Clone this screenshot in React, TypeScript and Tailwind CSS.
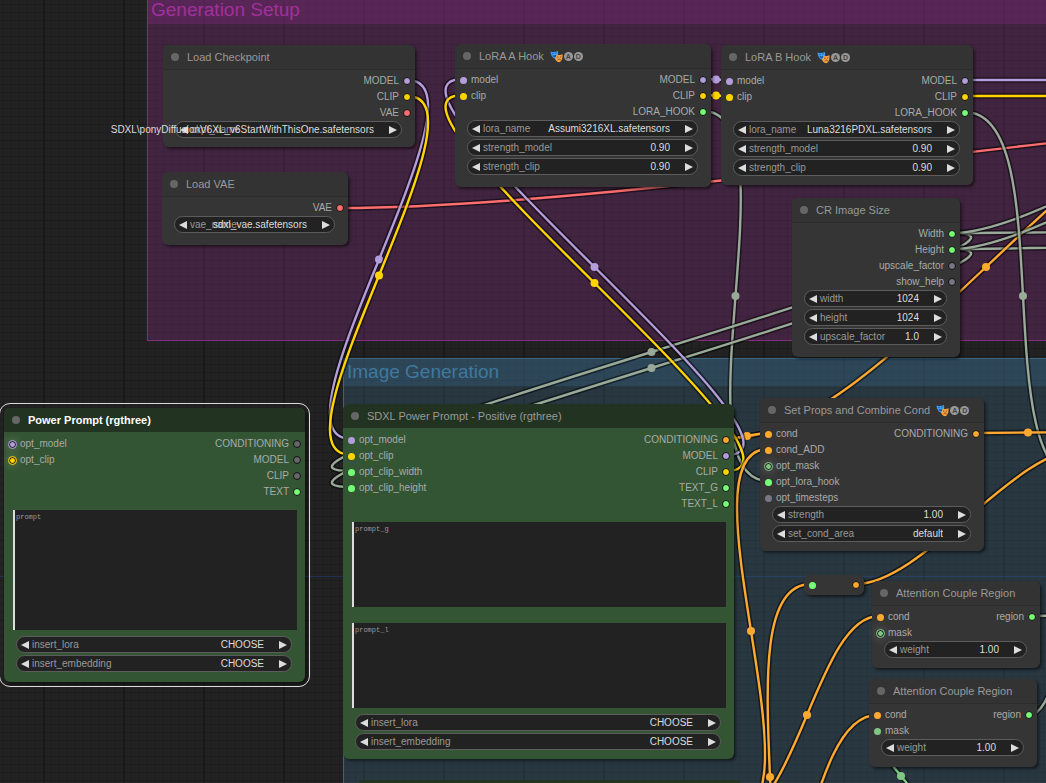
import React, { useId } from "react";
import clsx from "clsx";

type Kind = "model" | "clip" | "vae" | "cond" | "value" | "mask" | "off" | "any";

type Slot = { name: string; kind: Kind; ring?: boolean };

type Widget =
  | { type: "combo"; label: string; value: string }
  | { type: "number"; label: string; value: string };

type NodeProps = {
  title: string;
  place: string;
  tone?: "gray" | "green";
  hooks?: boolean;
  selected?: boolean;
  inputs?: Slot[];
  outputs?: Slot[];
  prompts?: { name: string; size: string }[];
  widgets: Widget[];
};

const dotColor: Record<Kind, string> = {
  model: "bg-[#b39ddb]",
  clip: "bg-[#ffd500]",
  vae: "bg-[#ff6e6e]",
  cond: "bg-[#ffa931]",
  value: "bg-[#77ff77]",
  mask: "bg-[#81c784]",
  off: "bg-[#666666]",
  any: "bg-[#777788]",
};

const ringColor: Partial<Record<Kind, string>> = {
  model: "outline-[#b39ddb]",
  clip: "outline-[#ffd500]",
  mask: "outline-[#81c784]",
};

function Dot({ slot, output }: { slot: Slot; output?: boolean }) {
  return (
    <span className="flex size-2 shrink-0 items-center justify-center">
      <span
        className={clsx(
          "rounded-full",
          dotColor[slot.kind],
          output && "size-2 border border-[#111]",
          !output && !slot.ring && "size-[7px]",
          slot.ring &&
            "size-[7px] border border-[#111] shadow-[0_0_8px_3px_rgba(255,255,255,0.14)] outline outline-1",
          slot.ring && ringColor[slot.kind],
        )}
      />
    </span>
  );
}

function Masks() {
  return (
    <svg viewBox="0 0 26 26" className="ml-[6px] size-[13px] shrink-0" aria-hidden="true">
      <path d="M1 3c5 1.500 10 1.500 15-1 .8 6 .5 13-5 15.500C5 17 1.500 10 1 3z" fill="#3f9df5" />
      <path d="M4.500 6.500l3 .3M10.500 6.500l3-1M6 11c2 1.500 4 1 6-.5-1 4-4.500 4-6 .5z" stroke="#12508f" strokeWidth="1.500" fill="#12508f" />
      <path d="M13 9c4 1.500 8 1.500 12-.5.5 6.500-.5 13.500-6.500 16-5.500-1-8-5-8.500-8 2.500-2 3-4.500 3-7.500z" fill="#f5a142" />
      <path d="M14 14l3 .5M20 14.500l2.500-1M15 20.500c2-3 4.500-3 6.500-.5" stroke="#7a4312" strokeWidth="1.800" fill="none" />
    </svg>
  );
}

function Badge({ children }: { children: string }) {
  return (
    <span className="ml-px flex size-[9px] items-center justify-center rounded-full bg-[#999] text-[7px] leading-none font-bold text-[#444]">
      {children}
    </span>
  );
}

function Arrow({ dir, label }: { dir: "left" | "right"; label: string }) {
  return (
    <button type="button" aria-label={`${dir === "left" ? "Previous" : "Next"} ${label}`} className="shrink-0">
      <svg viewBox="0 0 8 8" className="size-2">
        <path d={dir === "left" ? "M8 0v8L0 4z" : "M0 0v8l8-4z"} fill="#ddd" />
      </svg>
    </button>
  );
}

function WidgetRow({ widget }: { widget: Widget }) {
  const id = useId();
  const valueClass = "col-start-1 row-start-1 appearance-none bg-transparent p-0 text-right text-[#ddd] outline-none";
  return (
    <div className="flex h-[17px] items-center gap-[3px] rounded-full border border-[#5c5c5c] bg-[#222] px-1 text-[10px] leading-none">
      <Arrow dir="left" label={widget.label} />
      <div className="mr-3 grid min-w-0 flex-1 grid-cols-[minmax(0,1fr)] items-center">
        <label htmlFor={id} className="col-start-1 row-start-1 whitespace-nowrap text-[#999]">
          {widget.label}
        </label>
        {widget.type === "combo" ? (
          <select id={id} defaultValue={widget.value} className={clsx(valueClass, "w-max justify-self-end")}>
            <option>{widget.value}</option>
          </select>
        ) : (
          <input id={id} defaultValue={widget.value} inputMode="decimal" className={clsx(valueClass, "w-9 justify-self-end")} />
        )}
      </div>
      <Arrow dir="right" label={widget.label} />
    </div>
  );
}

function GraphNode({
  title,
  place,
  tone = "gray",
  hooks,
  selected,
  inputs = [],
  outputs = [],
  prompts,
  widgets,
}: NodeProps) {
  const green = tone === "green";
  return (
    <section
      className={clsx(
        "absolute rounded-md text-[10px] leading-none text-[#aaa] shadow-[2px_2px_3px_rgba(0,0,0,0.5)]",
        green ? "bg-[#335533]" : "bg-[#353535]",
        selected && "outline outline-1 outline-offset-4 outline-[#ddd]",
        place,
      )}
    >
      <header
        className={clsx(
          "flex h-6 items-center rounded-t-md pl-2",
          green ? "bg-[#223322]" : "bg-[#333] shadow-[0_1px_0_#2c2c2c]",
        )}
      >
        <span className="mr-2 size-2 shrink-0 rounded-full bg-[#666]" />
        <h2 className={clsx("text-[11px] leading-none whitespace-nowrap", selected ? "font-bold text-white" : "text-[#999]")}>
          {title}
        </h2>
        {hooks && (
          <>
            <Masks />
            <Badge>A</Badge>
            <Badge>D</Badge>
          </>
        )}
      </header>
      <div className="flex justify-between px-1 pt-1">
        <ul>
          {inputs.map((slot) => (
            <li key={slot.name} className="flex h-4 items-center gap-1">
              <Dot slot={slot} />
              {slot.name}
            </li>
          ))}
        </ul>
        <ul>
          {outputs.map((slot) => (
            <li key={slot.name} className="flex h-4 items-center justify-end gap-1">
              {slot.name}
              <Dot slot={slot} output />
            </li>
          ))}
        </ul>
      </div>
      {prompts && (
        <div className="mt-[10px] mb-[6px] flex flex-col gap-4 pr-2 pl-[9px]">
          {prompts.map((p) => (
            <textarea
              key={p.name}
              aria-label={p.name}
              placeholder={p.name}
              className={clsx(
                "block w-full resize-none border-l-2 border-[#ddd] bg-[#222] px-px pt-[3px] font-['Liberation_Mono',monospace] text-[7px] leading-[8px] text-[#ddd] outline-none placeholder:text-[#999]",
                p.size,
              )}
            />
          ))}
        </div>
      )}
      <div className="mr-[13px] ml-3 flex flex-col gap-[2px]">
        {widgets.map((w) => (
          <WidgetRow key={w.label} widget={w} />
        ))}
      </div>
    </section>
  );
}

type Link = { from: [number, number]; to: [number, number]; color: string };

const violet = "#b39ddb";
const yellow = "#ffd500";
const orange = "#ffa931";
const sage = "#99aa99";

const links: Link[] = [
  { from: [340, 208], to: [1560, 101], color: "#ff6e6e" },
  { from: [407, 80], to: [351, 439], color: violet },
  { from: [407, 96], to: [351, 455], color: yellow },
  { from: [703, 79], to: [729, 80], color: violet },
  { from: [703, 95], to: [729, 96], color: yellow },
  { from: [703, 111], to: [768, 481], color: sage },
  { from: [965, 80], to: [1400, 80], color: violet },
  { from: [965, 96], to: [1400, 96], color: yellow },
  { from: [952, 233], to: [351, 471], color: sage },
  { from: [952, 249], to: [351, 487], color: sage },
  { from: [952, 233], to: [1500, 226], color: sage },
  { from: [952, 249], to: [1500, 238], color: sage },
  { from: [726, 439], to: [1246, 95], color: orange },
  { from: [952, 233], to: [1250, 130], color: sage },
  { from: [952, 249], to: [1250, 146], color: sage },
  { from: [965, 112], to: [1081, 480], color: sage },
  { from: [726, 439], to: [768, 433], color: orange },
  { from: [726, 455], to: [463, 79], color: violet },
  { from: [726, 471], to: [463, 95], color: yellow },
  { from: [976, 433], to: [1080, 432], color: orange },
  { from: [734, 813], to: [768, 449], color: orange },
  { from: [856, 584], to: [1081, 449], color: orange },
  { from: [729, 970], to: [811, 584], color: orange },
  { from: [735, 814], to: [879, 616], color: orange },
  { from: [729, 970], to: [877, 715], color: orange },
  { from: [1031, 616], to: [1200, 614], color: sage },
  { from: [1029, 715], to: [1085, 632], color: sage },
  { from: [925, 821], to: [877, 731], color: "#81c784" },
];

function Links() {
  return (
    <svg className="pointer-events-none absolute inset-0 h-full w-full" fill="none" aria-hidden="true">
      {links.map(({ from: [x1, y1], to: [x2, y2], color }, i) => {
        const bend = Math.hypot(x2 - x1, y2 - y1) / 4;
        const d = `M${x1} ${y1}C${x1 + bend} ${y1} ${x2 - bend} ${y2} ${x2} ${y2}`;
        return (
          <g key={i}>
            <path d={d} stroke="#000" strokeOpacity="0.5" strokeWidth="5.500" />
            <path d={d} stroke={color} strokeWidth="2.400" />
            <circle cx={(x1 + x2) / 2} cy={(y1 + y2) / 2} r="4" fill={color} />
          </g>
        );
      })}
    </svg>
  );
}

const choosers: Widget[] = [
  { type: "combo", label: "insert_lora", value: "CHOOSE" },
  { type: "combo", label: "insert_embedding", value: "CHOOSE" },
];

const hookInputs: Slot[] = [
  { name: "model", kind: "model" },
  { name: "clip", kind: "clip" },
];

const hookOutputs: Slot[] = [
  { name: "MODEL", kind: "model" },
  { name: "CLIP", kind: "clip" },
  { name: "LORA_HOOK", kind: "value" },
];

const nodes: NodeProps[] = [
  {
    title: "Load Checkpoint",
    place: "left-[163px] top-[45px] h-[102px] w-[252px]",
    outputs: [
      { name: "MODEL", kind: "model" },
      { name: "CLIP", kind: "clip" },
      { name: "VAE", kind: "vae" },
    ],
    widgets: [{ type: "combo", label: "ckpt_name", value: "SDXL\\ponyDiffusionV6XL_v6StartWithThisOne.safetensors" }],
  },
  {
    title: "Load VAE",
    place: "left-[162px] top-[172px] h-[73px] w-[186px]",
    outputs: [{ name: "VAE", kind: "vae" }],
    widgets: [{ type: "combo", label: "vae_name", value: "sdxl_vae.safetensors" }],
  },
  {
    title: "LoRA A Hook",
    place: "left-[455px] top-[44px] h-[143px] w-[256px]",
    hooks: true,
    inputs: hookInputs,
    outputs: hookOutputs,
    widgets: [
      { type: "combo", label: "lora_name", value: "Assumi3216XL.safetensors" },
      { type: "number", label: "strength_model", value: "0.90" },
      { type: "number", label: "strength_clip", value: "0.90" },
    ],
  },
  {
    title: "LoRA B Hook",
    place: "left-[721px] top-[45px] h-[140px] w-[252px]",
    hooks: true,
    inputs: hookInputs,
    outputs: hookOutputs,
    widgets: [
      { type: "combo", label: "lora_name", value: "Luna3216PDXL.safetensors" },
      { type: "number", label: "strength_model", value: "0.90" },
      { type: "number", label: "strength_clip", value: "0.90" },
    ],
  },
  {
    title: "CR Image Size",
    place: "left-[792px] top-[198px] h-[159px] w-[168px]",
    outputs: [
      { name: "Width", kind: "value" },
      { name: "Height", kind: "value" },
      { name: "upscale_factor", kind: "any" },
      { name: "show_help", kind: "any" },
    ],
    widgets: [
      { type: "number", label: "width", value: "1024" },
      { type: "number", label: "height", value: "1024" },
      { type: "number", label: "upscale_factor", value: "1.0" },
    ],
  },
  {
    title: "Power Prompt (rgthree)",
    place: "left-[4px] top-[408px] h-[274px] w-[301px]",
    tone: "green",
    selected: true,
    inputs: [
      { name: "opt_model", kind: "model", ring: true },
      { name: "opt_clip", kind: "clip", ring: true },
    ],
    outputs: [
      { name: "CONDITIONING", kind: "off" },
      { name: "MODEL", kind: "off" },
      { name: "CLIP", kind: "off" },
      { name: "TEXT", kind: "value" },
    ],
    prompts: [{ name: "prompt", size: "h-[120px]" }],
    widgets: choosers,
  },
  {
    title: "SDXL Power Prompt - Positive (rgthree)",
    place: "left-[343px] top-[404px] h-[355px] w-[391px]",
    tone: "green",
    inputs: [
      { name: "opt_model", kind: "model" },
      { name: "opt_clip", kind: "clip" },
      { name: "opt_clip_width", kind: "value" },
      { name: "opt_clip_height", kind: "value" },
    ],
    outputs: [
      { name: "CONDITIONING", kind: "cond" },
      { name: "MODEL", kind: "model" },
      { name: "CLIP", kind: "clip" },
      { name: "TEXT_G", kind: "value" },
      { name: "TEXT_L", kind: "value" },
    ],
    prompts: [
      { name: "prompt_g", size: "h-[85px]" },
      { name: "prompt_l", size: "h-[85px]" },
    ],
    widgets: choosers,
  },
  {
    title: "Set Props and Combine Cond",
    place: "left-[760px] top-[398px] h-[153px] w-[224px]",
    hooks: true,
    inputs: [
      { name: "cond", kind: "cond" },
      { name: "cond_ADD", kind: "cond" },
      { name: "opt_mask", kind: "mask", ring: true },
      { name: "opt_lora_hook", kind: "value" },
      { name: "opt_timesteps", kind: "any" },
    ],
    outputs: [{ name: "CONDITIONING", kind: "cond" }],
    widgets: [
      { type: "number", label: "strength", value: "1.00" },
      { type: "combo", label: "set_cond_area", value: "default" },
    ],
  },
  {
    title: "Attention Couple Region",
    place: "left-[872px] top-[581px] h-[87px] w-[168px]",
    inputs: [
      { name: "cond", kind: "cond" },
      { name: "mask", kind: "mask", ring: true },
    ],
    outputs: [{ name: "region", kind: "value" }],
    widgets: [{ type: "number", label: "weight", value: "1.00" }],
  },
  {
    title: "Attention Couple Region",
    place: "left-[869px] top-[679px] h-[88px] w-[168px]",
    inputs: [
      { name: "cond", kind: "cond" },
      { name: "mask", kind: "mask" },
    ],
    outputs: [{ name: "region", kind: "value" }],
    widgets: [{ type: "number", label: "weight", value: "1.00" }],
  },
];

export default function App() {
  return (
    <main className="relative h-screen w-full overflow-hidden bg-[#222] [background-image:linear-gradient(to_right,#1a1a1a_2px,transparent_2px),linear-gradient(to_bottom,#1a1a1a_1px,transparent_1px),linear-gradient(to_right,#1d1d1d_1px,transparent_1px),linear-gradient(to_bottom,#1d1d1d_1px,transparent_1px)] [background-position:43px_60px,43px_60px,3px_4px,3px_4px] [background-size:80px_80px,80px_80px,8px_8px,8px_8px] font-['Liberation_Sans',Arial,sans-serif]">
      <div className="absolute inset-x-0 top-[576px] h-px bg-[#223366]/70" />
      <section className="absolute -top-1 -right-px left-[147px] h-[345px] border border-[#a1309b]/70 bg-[#a1309b]/25">
        <h1 className="flex h-[27px] items-center bg-[#a1309b]/25 pb-[3px] pl-[3px] text-[19px] leading-none text-[#a1309b]">
          Generation Setup
        </h1>
      </section>
      <section className="absolute -right-px -bottom-px left-[343px] top-[358px] border border-[#3f789e]/70 bg-[#3f789e]/25">
        <h1 className="flex h-[27px] items-center bg-[#3f789e]/25 pb-[3px] pl-[3px] text-[19px] leading-none text-[#3f789e]">
          Image Generation
        </h1>
      </section>
      <Links />
      {nodes.map((n, i) => (
        <GraphNode key={i} {...n} />
      ))}
      <div className="absolute top-[575px] left-[804px] flex h-5 w-[60px] items-center justify-between rounded-md bg-[#353535] px-1 shadow-[2px_2px_3px_rgba(0,0,0,0.5)]">
        <Dot slot={{ name: "in", kind: "value" }} />
        <Dot slot={{ name: "out", kind: "cond" }} output />
      </div>
      <div className="absolute top-[780px] left-[358px] h-6 w-[384px] rounded-t-md bg-[#223322]" />
    </main>
  );
}
